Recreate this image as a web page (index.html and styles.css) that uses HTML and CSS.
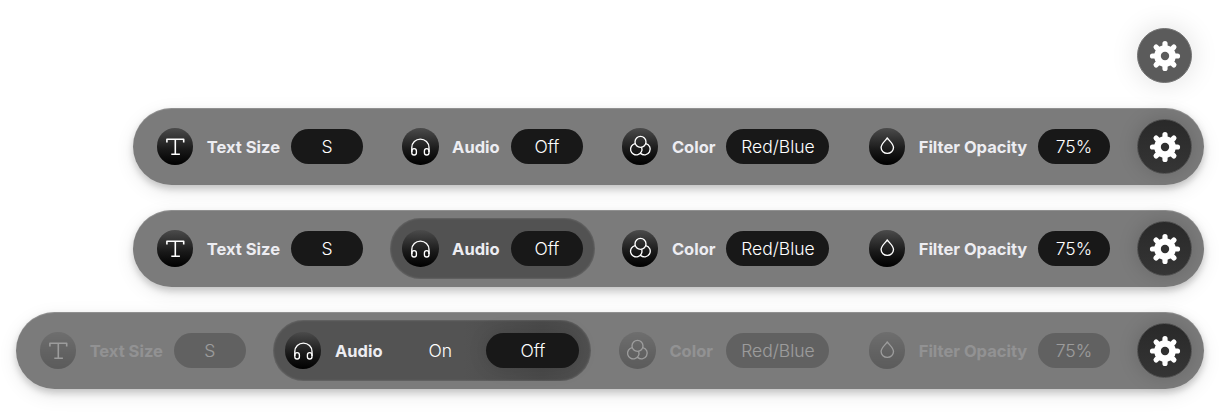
FILE: index.html
```
<!DOCTYPE html>
<html lang="en">
<head>
<meta charset="utf-8">
<title>Reader controls</title>
<link rel="stylesheet" href="styles.css">
</head>
<body>
<svg class="defs" aria-hidden="true">
  <symbol id="text" viewBox="0 0 36.5 36.5"><path d="M9.9 14.4V11.2H26.7V14.4M18.3 11.2V26.3M14.3 26.3H22.9" stroke-width="1.6"/></symbol>
  <symbol id="audio" viewBox="0 0 36.5 36.5"><path d="M9.8 24V19.6a8.6 8.5 0 0 1 17.2 0V24"/><rect x="9.8" y="20.6" width="4.6" height="6.4" rx="2.3"/><rect x="22.4" y="20.6" width="4.6" height="6.4" rx="2.3"/></symbol>
  <symbol id="color" viewBox="0 0 36.5 36.5"><circle cx="18.5" cy="13.9" r="5.5"/><path d="M13.2 15.6A5.7 5.7 0 1 0 19.6 19.2M23.8 15.6A5.7 5.7 0 1 1 18.5 25.2"/></symbol>
  <symbol id="drop" viewBox="0 0 36.5 36.5"><path d="M18.3 9.9C16.6 12.8 12.1 15.7 12.1 19.6a6.2 5.7 0 0 0 12.4 0C24.5 15.7 20 12.8 18.3 9.9Z"/></symbol>
  <symbol id="gear" viewBox="-16 -16 32 32">
    <path class="teeth" d="M0-12.5V12.5M-12.5 0H12.5M-8.9-8.9L8.9 8.9M-8.9 8.9L8.9-8.9"/>
    <circle class="body" r="10.8"/><circle class="hole" r="4.2"/>
  </symbol>
</svg>
<main class="states">
  <div class="closed"><button class="gear"><svg><use href="#gear"/></svg></button></div>

  <div class="bar">
    <div class="item"><span class="icon"><svg><use href="#text"/></svg></span><b class="label size">Text Size</b><span class="pill">S</span></div>
    <div class="item"><span class="icon"><svg><use href="#audio"/></svg></span><b class="label audio">Audio</b><span class="pill">Off</span></div>
    <div class="item"><span class="icon"><svg><use href="#color"/></svg></span><b class="label color">Color</b><span class="pill wide">Red/Blue</span></div>
    <div class="item"><span class="icon"><svg><use href="#drop"/></svg></span><b class="label filter">Filter Opacity</b><span class="pill">75%</span></div>
    <button class="gear dark"><svg><use href="#gear"/></svg></button>
  </div>

  <div class="bar">
    <div class="item"><span class="icon"><svg><use href="#text"/></svg></span><b class="label size">Text Size</b><span class="pill">S</span></div>
    <div class="item active"><span class="icon"><svg><use href="#audio"/></svg></span><b class="label audio">Audio</b><span class="pill">Off</span></div>
    <div class="item"><span class="icon"><svg><use href="#color"/></svg></span><b class="label color">Color</b><span class="pill wide">Red/Blue</span></div>
    <div class="item"><span class="icon"><svg><use href="#drop"/></svg></span><b class="label filter">Filter Opacity</b><span class="pill">75%</span></div>
    <button class="gear dark"><svg><use href="#gear"/></svg></button>
  </div>

  <div class="bar">
    <div class="item dim"><span class="icon"><svg><use href="#text"/></svg></span><b class="label size">Text Size</b><span class="pill">S</span></div>
    <div class="item active open"><span class="icon"><svg><use href="#audio"/></svg></span><b class="label audio">Audio</b><span class="option">On</span><span class="pill selected">Off</span></div>
    <div class="item dim spaced"><span class="icon"><svg><use href="#color"/></svg></span><b class="label color">Color</b><span class="pill wide">Red/Blue</span></div>
    <div class="item dim"><span class="icon"><svg><use href="#drop"/></svg></span><b class="label filter">Filter Opacity</b><span class="pill">75%</span></div>
    <button class="gear dark"><svg><use href="#gear"/></svg></button>
  </div>
</main>
</body>
</html>
```
FILE: styles.css
```
* { box-sizing: border-box; }
body { margin: 0; background: #fff; font-family: Inter, sans-serif; }
.defs { display: none; }
.states { display: flex; flex-direction: column; align-items: flex-end; gap: 25.5px; height: 415px; padding: 28.4px 20px 0 0; }
.closed { padding-right: 12px; height: 54.5px; }
.bar {
  display: flex; flex-shrink: 0; align-items: center; gap: 15.3px; height: 76.5px; padding: 0 12px; border-radius: 39px;
  background: #7b7b7b;
  box-shadow: inset 0 1px 0 rgba(255,255,255,.16), 0 4px 7px rgba(0,0,0,.18), 0 6px 20px rgba(0,0,0,.09);
}
.item { display: flex; align-items: center; height: 61px; padding: 0 12px; border-radius: 31px; }
.active { background: #525252; box-shadow: inset 0 0 1.5px 1px rgba(255,255,255,.1); }
.open { margin-right: .7px; background: linear-gradient(90deg, #535353 60%, #4a4a4a 85%, #505050); }
.dim > .icon, .dim > .pill { opacity: .25; }
.dim > .label { opacity: .2; }
.icon { width: 36.5px; height: 36.5px; margin-right: 13.5px; border-radius: 50%; background: linear-gradient(#4b4b4b, #181818 60%, #000); }
.icon svg { display: block; width: 36.5px; height: 36.5px; fill: none; stroke: #fff; stroke-width: 1.35; stroke-linejoin: round; }
.label { margin-right: 11px; padding-top: 1.2px; color: #ededf2; font-size: 16.5px; font-weight: 700; line-height: 20px; white-space: nowrap; }
.size { width: 73.5px; }
.audio { width: 48px; }
.color { width: 43.5px; }
.filter { width: 108.5px; }
.pill { display: flex; align-items: center; justify-content: center; width: 71.5px; height: 35.5px; padding-top: 1.2px; border-radius: 18px; background: #181818; color: #fff; font-size: 17.5px; font-weight: 300; line-height: 22px; }
.wide { width: 103px; }
.selected { width: 93px; box-shadow: 0 0 20px rgba(0,0,0,.12); }
.option { width: 92.5px; padding-top: 1.2px; color: #fff; font-size: 17.5px; font-weight: 300; line-height: 22px; text-align: center; }
.spaced .color { margin-right: 13.5px; }
.gear { display: grid; place-items: center; width: 55px; height: 55px; padding: 0; border: 1px solid #747474; border-radius: 50%; background: #5b5b5b; box-shadow: 0 0 28px rgba(0,0,0,.13); --hole: #5b5b5b; }
.dark { border-color: #505050; background: linear-gradient(#292929, #353535); box-shadow: 0 0 20px rgba(0,0,0,.16); --hole: #303030; }
.gear svg { width: 32px; height: 32px; }
.teeth { fill: none; stroke: #fff; stroke-width: 5.2; stroke-linecap: round; }
.body { fill: #fff; }
.hole { fill: var(--hole); }
```
